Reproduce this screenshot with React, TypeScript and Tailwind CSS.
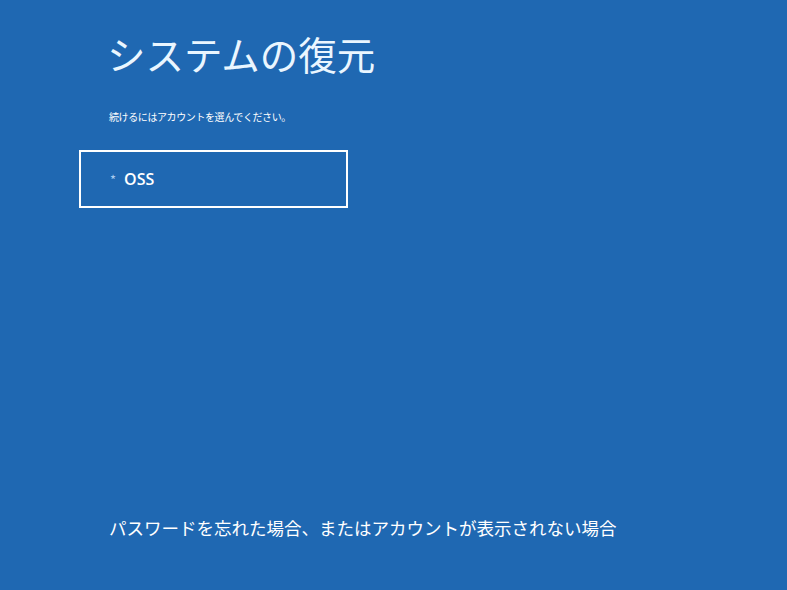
export default function App() {
  return (
    <div
      className="w-[787px] h-[590px] bg-[#1f68b2] text-white flex flex-col overflow-hidden"
      style={{ fontFamily: '"Noto Sans CJK JP", "Noto Sans", sans-serif' }}
    >
      <div className="pl-[107px] pt-[27px]">
        <h1 className="text-[38.5px] leading-[52px] text-[#eaf6ff]">システムの復元</h1>
        <p className="mt-[31px] pl-[2px] text-[10px] leading-[14px] tracking-[-0.4px]">続けるにはアカウントを選んでください。</p>
      </div>
      <div className="ml-[79px] mt-[26px] w-[269px] h-[58px] border-2 border-white flex items-center pl-[29px]">
        <span className="text-[13px] text-[#a9cdf0] mr-[8px] mt-[2px]">*</span>
        <span className="text-[16px] leading-none font-semibold" style={{ fontFamily: '"Open Sans", "Noto Sans", sans-serif' }}>OSS</span>
      </div>
      <div className="flex-1" />
      <p className="pl-[109px] pb-[50px] text-[17.5px] leading-[24px]">
        パスワードを忘れた場合、またはアカウントが表示されない場合
      </p>
    </div>
  );
}
